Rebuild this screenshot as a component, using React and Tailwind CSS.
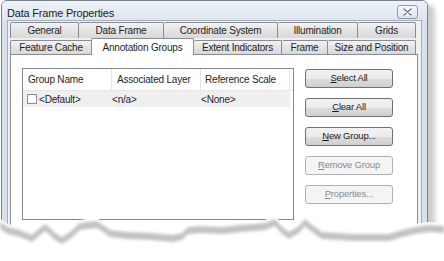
import { Fragment } from 'react'

const rowOne = [
  { label: 'General', w: 'w-[69px] border-l' },
  { label: 'Data Frame', w: 'w-[85px]' },
  { label: 'Coordinate System', w: 'w-[114px]' },
  { label: 'Illumination', w: 'w-[80px]' },
  { label: 'Grids', w: 'w-[58px]' },
]

const buttons = [
  { key: 'S', rest: 'elect All', disabled: false },
  { key: 'C', rest: 'lear All', disabled: false },
  { key: 'N', rest: 'ew Group...', disabled: false },
  { key: 'R', rest: 'emove Group', disabled: true },
  { key: 'P', rest: 'roperties...', disabled: true },
]

// top of the torn edge shadow, left to right
const tear = [
  [0, 222], [8, 227], [20, 230], [32, 235], [40, 228], [45, 224], [50, 228], [55, 233],
  [62, 237], [70, 232], [80, 223], [87, 222], [97, 221], [103, 225], [110, 230], [127, 232],
  [150, 233], [173, 235], [182, 233], [188, 227], [200, 226], [222, 227], [242, 225],
  [265, 223], [275, 219], [282, 227], [289, 232], [299, 226], [305, 219], [312, 225],
  [322, 232], [355, 234], [389, 234], [402, 230], [415, 227], [429, 225], [444, 226],
]

function TornEdge() {
  const top = tear.map(([x, y]) => `${x},${y - 3}`).join(' ')
  const upper = tear.map(([x, y]) => `${x},${y}`).join(' ')
  const lower = [...tear].reverse().map(([x, y]) => `${x},${y + 7}`).join(' ')
  return (
    <svg className="absolute inset-0 pointer-events-none" width="444" height="261" viewBox="0 0 444 261">
      <defs>
        <filter id="soft" x="-5%" y="-50%" width="110%" height="200%">
          <feGaussianBlur stdDeviation="1.4" />
        </filter>
      </defs>
      <polygon points={`${top} 444,261 0,261`} fill="#ffffff" />
      <polygon points={`${upper} ${lower}`} fill="#c2c2c2" filter="url(#soft)" />
    </svg>
  )
}

function Tab({ label, className }) {
  return (
    <div className={`${className} h-full flex items-center justify-center border-t border-r border-[#898c95] rounded-t-[2px] bg-[linear-gradient(#f3f3f3,#e3e3e3_50%,#d9d9d9)] whitespace-nowrap`}>
      {label}
    </div>
  )
}

function DialogButton({ k, rest, disabled }) {
  return (
    <button
      className={`w-[88px] h-[19px] rounded-[3px] border flex items-center justify-center text-[9.5px] ${
        disabled
          ? 'border-[#adb2b5] bg-[#f4f4f4] text-[#8a8a8a]'
          : 'border-[#707070] bg-[linear-gradient(#f2f2f2_0%,#ebebeb_50%,#dddddd_51%,#cfcfcf_100%)] text-[#1a1a1a]'
      }`}
    >
      <span className="underline underline-offset-1">{k}</span>
      {rest}
    </button>
  )
}

export default function App() {
  return (
    <div className="relative w-[444px] h-[261px] bg-white overflow-hidden font-['Liberation_Sans',Arial,sans-serif] text-[10px] tracking-[-0.2px] text-[#1f1f1f]">
      <div className="ml-[1px] w-[427px] h-[240px] rounded-t-[6px] border border-[#77838f] bg-[#d9e2ec] shadow-[7px_5px_5px_rgba(0,0,0,0.2)] flex flex-col">
        {/* Title bar */}
        <div className="h-[26px] flex justify-between pl-[5px] pr-[9px] rounded-t-[5px] bg-[linear-gradient(#eef2f7,#dfe6ee)]">
          <span className="pt-[6px] leading-[13px] text-[11px] text-[#1b1b1b]">Data Frame Properties</span>
          <button className="mt-[4px] w-[21px] h-[14px] rounded-[3px] border border-[#8e9aa7] bg-[linear-gradient(#f6f8fa,#dce3ea)] flex items-center justify-center">
            <svg width="9" height="8" viewBox="0 0 9 8">
              <path d="M1 1 L8 7 M8 1 L1 7" stroke="#ffffff" strokeWidth="3.2" strokeLinecap="round" />
              <path d="M1 1 L8 7 M8 1 L1 7" stroke="#6d7884" strokeWidth="1.6" strokeLinecap="round" />
            </svg>
          </button>
        </div>

        {/* Client area */}
        <div className="mx-[5px] flex-1 border border-[#a5afba] bg-[#f0f0f0] pt-[1px] pl-[2px]">
          {/* Tab rows */}
          <div className="flex h-[16px]">
            {rowOne.map(t => (
              <Tab key={t.label} label={t.label} className={t.w} />
            ))}
          </div>
          <div className="flex items-end h-[16px]">
            <Tab label="Feature Cache" className="w-[82px] !h-[14px] border-l" />
            <div className="relative z-10 -mb-[1px] -ml-[1px] w-[103px] h-[17px] flex items-start justify-center pt-[1px] border-t border-l border-r border-[#898c95] rounded-t-[2px] bg-white whitespace-nowrap">
              Annotation Groups
            </div>
            <Tab label="Extent Indicators" className="w-[88px] !h-[14px]" />
            <Tab label="Frame" className="w-[46px] !h-[14px]" />
            <Tab label="Size and Position" className="w-[88px] !h-[14px]" />
          </div>

          {/* Panel */}
          <div className="w-[408px] h-[200px] border border-[#898c95] bg-white flex pl-[11px] pt-[13px]">
            {/* List view */}
            <div className="w-[272px] h-[152px] border border-[#828790] bg-white">
              <div className="flex h-[22px] border-b border-[#e5e5e5] text-[#262626]">
                <div className="w-[89px] border-r border-[#e5e5e5] pl-[5px] flex items-center">Group Name</div>
                <div className="w-[89px] border-r border-[#e5e5e5] pl-[5px] flex items-center">Associated Layer</div>
                <div className="w-[89px] border-r border-[#e5e5e5] pl-[4px] flex items-center">Reference Scale</div>
              </div>
              <div className="flex h-[16px] w-[267px] bg-[#efefef] items-center">
                <div className="w-[89px] pl-[4px] flex items-center gap-[2px]">
                  <span className="w-[10px] h-[10px] border border-[#8f8f8f] bg-white" />
                  <span>&lt;Default&gt;</span>
                </div>
                <div className="w-[89px]">&lt;n/a&gt;</div>
                <div className="w-[89px]">&lt;None&gt;</div>
              </div>
            </div>

            {/* Buttons */}
            <div className="ml-[11px] mt-[1px] flex flex-col gap-[10px]">
              {buttons.map(b => (
                <Fragment key={b.key}>
                  <DialogButton k={b.key} rest={b.rest} disabled={b.disabled} />
                </Fragment>
              ))}
            </div>
          </div>
        </div>
      </div>
      <TornEdge />
    </div>
  )
}
